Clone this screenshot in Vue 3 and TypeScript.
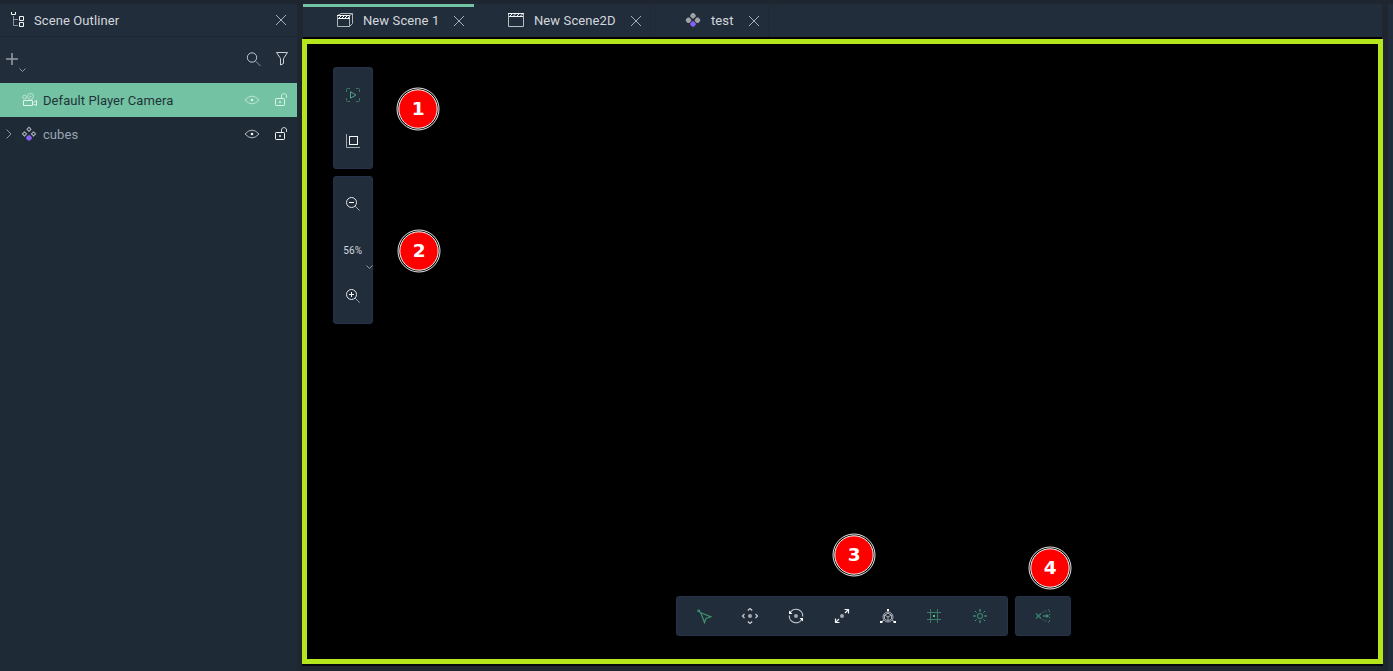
<script setup lang="ts">
interface Tab { label: string; icon: 'scene3d' | 'scene2d' | 'prefab'; cls: string; active?: boolean }
const tabs: Tab[] = [
  { label: 'New Scene 1', icon: 'scene3d', cls: 'tab-a', active: true },
  { label: 'New Scene2D', icon: 'scene2d', cls: 'tab-b' },
  { label: 'test', icon: 'prefab', cls: 'tab-c' },
]
const markers = [
  { n: 1, x: 418, y: 109 },
  { n: 2, x: 419, y: 251 },
  { n: 3, x: 854, y: 555 },
  { n: 4, x: 1050, y: 568 },
]
const rows = [
  { label: 'Default Player Camera', selected: true },
  { label: 'cubes', selected: false },
]
</script>

<template>
  <div class="editor">
    <aside class="outliner">
      <header class="panel-head">
        <svg class="tree" width="16" height="16" fill="none">
          <path d="M3.5 4V13.5H8M3.5 7.5H8" stroke="#8b98a0" />
          <path d="M1.5 0V2.5H5.5V0M9.5 4.5h4v4h-4zM9.5 10.5h4v4h-4z" stroke="#f4f6f7" />
        </svg>
        <span class="title">Scene Outliner</span>
        <svg class="close" width="12" height="12"><path d="M1 1L11 11M11 1L1 11" stroke="#a7aeb5" /></svg>
      </header>
      <div class="tools">
        <svg class="add" width="28" height="24" fill="none">
          <path d="M6 7H18M12 1V13" stroke="#979ea7" stroke-width="1.5" />
          <path d="M19.5 16.5L22.5 19.5L25.5 16.5" stroke="#8c959f" />
        </svg>
        <svg class="search" width="16" height="16" fill="none" stroke="#c3c7cc">
          <circle cx="6" cy="5.5" r="4.7" /><path d="M9.5 9L14.5 14" stroke="#8c959f" />
        </svg>
        <svg class="filter" width="14" height="16" fill="none" stroke="#cdd0d4">
          <path d="M1.5 1.5H12.5L8.5 7.5V12.5L5.5 14V7.5Z" />
        </svg>
      </div>
      <div v-for="row in rows" :key="row.label" class="row" :class="{ selected: row.selected }">
        <svg class="expand" width="8" height="12" fill="none">
          <path v-if="!row.selected" d="M1.5 1.5L6 6L1.5 10.5" stroke="#8d98a3" />
        </svg>
        <svg v-if="row.selected" class="node" width="17" height="16" fill="none" stroke="#e2f6ed">
          <circle cx="3.6" cy="5" r="1.8" opacity=".65" /><circle cx="9.5" cy="4.4" r="3" opacity=".65" />
          <circle cx="9.5" cy="4.4" r=".4" />
          <path d="M2.5 8.5H11.5V13.5H2.5ZM12.5 10.5L15.5 8.5V13.5L12.5 12" />
        </svg>
        <svg v-else class="node" width="17" height="16" fill="none" stroke="#a5a9ae" stroke-width="1.2">
          <path d="M8 1.2L10 3.3L8 5.4L6 3.3ZM3.5 5.8L5.6 7.9L3.5 10L1.4 7.9ZM12.5 5.8L14.6 7.9L12.5 10L10.4 7.9Z" stroke-linejoin="round" />
          <path d="M7 9.3H9L10.8 11.2V12.8L9 14.6H7L5.2 12.8V11.2Z" fill="#8860f2" stroke="none" />
        </svg>
        <span class="name">{{ row.label }}</span>
        <svg class="eye" width="16" height="12" fill="none">
          <path d="M1 6Q8-1.7 15 6Q8 13.7 1 6Z" stroke="currentColor" opacity=".7" />
          <circle cx="8" cy="6" r="1.3" fill="currentColor" />
        </svg>
        <svg class="lock" width="14" height="14" fill="none" stroke="currentColor">
          <rect x="1.5" y="5.5" width="9" height="7" rx=".7" />
          <path d="M7.5 5V3C7.5-.2 12.5-.2 12.5 3V5" opacity=".85" />
          <path d="M5 9H7" stroke-width="2" opacity=".7" />
        </svg>
      </div>
    </aside>

    <main class="workspace">
      <nav class="tabs">
        <div v-for="tab in tabs" :key="tab.label" class="tab" :class="[tab.cls, { active: tab.active }]">
          <svg v-if="tab.icon === 'scene3d'" class="tab-icon" width="17" height="16" fill="none" stroke="#aeb5bc">
            <path d="M.5 3.5H12.5V14.5H.5ZM.5 3.5L4 1.5H15.5L12.5 3.5M15.5 1.5V11.5L12.5 14.5" />
            <path d="M0 3.5H13M1 6.5H13" stroke="#f1f3f5" />
            <path d="M2 6L4 4M5 6L7 4M8 6L10 4M11 6L12.5 4.5" stroke="#f1f3f5" />
          </svg>
          <svg v-else-if="tab.icon === 'scene2d'" class="tab-icon" width="17" height="16" fill="none" stroke="#b7bdc3">
            <path d="M.5 1.5H15.5V14.5H.5Z" />
            <path d="M0 1.5H16M1 4.5H15" stroke="#f1f3f5" />
            <path d="M2 4L4 2M5.5 4L7.5 2M9 4L11 2M12.5 4L14.5 2" stroke="#f1f3f5" />
          </svg>
          <svg v-else class="tab-icon" width="17" height="16" fill="#9fa3a7">
            <path d="M7.2 1h1.6L10.7 2.9v1.6L8.8 6.4H7.2L5.3 4.5V2.9ZM2.7 5.5h1.6L6.2 7.4V9L4.3 10.9H2.7L.8 9V7.4ZM11.7 5.5h1.6L15.2 7.4V9L13.3 10.9h-1.6L9.8 9V7.4Z" />
            <path d="M7.2 9.3h1.6l2 1.9v1.6l-2 1.9H7.2l-2-1.9v-1.6Z" fill="#865ff4" />
          </svg>
          <span class="tab-label">{{ tab.label }}</span>
          <svg class="close" width="12" height="12"><path d="M1 1L11 11M11 1L1 11" stroke="#a7aeb5" /></svg>
        </div>
      </nav>
      <section class="viewport"></section>
    </main>
    <div class="edge"></div>

    <div class="bar vertical view-bar">
      <svg class="tool" viewBox="0 0 24 24" fill="none">
        <path d="M5.5 9V6.5Q5.5 5.5 6.5 5.5H9M15 5.5H17.5Q18.5 5.5 18.5 6.5V9M18.5 15V17.5Q18.5 18.5 17.5 18.5H15M9 18.5H6.5Q5.5 18.5 5.5 17.5V15" stroke="#3b7868" />
        <path d="M9.5 8.8L15 12L9.5 15.2Z" stroke="#4ba77f" />
      </svg>
      <svg class="tool" viewBox="0 0 24 24" fill="none">
        <path d="M5.5 5V18.5H19" stroke="#a5acb3" /><rect x="8.5" y="7.5" width="8" height="8" stroke="#f5f6f7" />
      </svg>
    </div>
    <div class="bar vertical zoom-bar">
      <svg class="tool" viewBox="0 0 24 24" fill="none" stroke="#e5e7e9">
        <circle cx="10.5" cy="10.5" r="5" /><path d="M8 10.5H13" stroke="#fff" /><path d="M14 14L18.7 18.7" stroke="#9aa2aa" />
      </svg>
      <div class="percent">56%
        <svg class="chevron" width="8" height="6" fill="none"><path d="M1.5 1.5L4.5 4.5L7.5 1.5" stroke="#929aa4" /></svg>
      </div>
      <svg class="tool" viewBox="0 0 24 24" fill="none" stroke="#e5e7e9">
        <circle cx="10.5" cy="10.5" r="5" /><path d="M8 10.5H13M10.5 8V13" stroke="#fff" /><path d="M14 14L18.7 18.7" stroke="#9aa2aa" />
      </svg>
    </div>
    <div class="bar gizmo-bar">
      <svg class="tool" viewBox="0 0 24 24" fill="none">
        <circle cx="6.7" cy="6.7" r="1.5" fill="#3d806c" />
        <path d="M7 7L8.8 8.8L12.5 18.5L14 14.5L18.8 12.8L8.8 8.8" stroke="#42936f" stroke-width="1.2" />
      </svg>
      <svg class="tool" viewBox="0 0 24 24" fill="none" stroke="#d0d3d7" stroke-width="1.2">
        <circle cx="12" cy="12" r="2" fill="#a2a8b0" stroke="none" />
        <path d="M9.8 6.5L12 4.5L14.2 6.5M9.8 17.5L12 19.5L14.2 17.5M6.5 9.8L4.5 12L6.5 14.2M17.5 9.8L19.5 12L17.5 14.2" />
      </svg>
      <svg class="tool" viewBox="0 0 24 24" fill="none" stroke="#cdd1d5" stroke-width="1.1">
        <circle cx="12" cy="12" r="2" fill="#a2a8b0" stroke="none" />
        <path d="M6 9A6.7 6.7 0 0 1 18.7 12.5M18 15A6.7 6.7 0 0 1 5.3 11.5" />
        <path d="M5 6.5V10H8.5ZM19 17.5V14H15.5Z" fill="#fff" stroke="none" />
      </svg>
      <svg class="tool" viewBox="0 0 24 24" fill="none" stroke="#f0f1f3" stroke-width="1.2">
        <circle cx="12" cy="12" r="2" fill="#a2a8b0" stroke="none" />
        <path d="M14.5 5.5H18.5V9.5M18.5 5.5L15 9M5.5 14.5V18.5H9.5M5.5 18.5L9 15" />
      </svg>
      <svg class="tool" viewBox="0 0 24 24" fill="none" stroke="#a6acb4">
        <circle cx="12" cy="13" r="5" /><path d="M12 5V10M4.5 18.5L8 16M19.5 18.5L16 16M8.5 11L12 9.3L15.5 11V15L12 17L8.5 15ZM8.5 11L12 13L15.5 11M12 13V17" />
        <path d="M11 5H13V7H11ZM4 17H6.5V19H4ZM17.5 17H20V19H17.5Z" fill="#fff" stroke="none" />
      </svg>
      <svg class="tool" viewBox="0 0 24 24" fill="none" stroke="#3b7a69">
        <path d="M8.5 5V19M15.5 5V19M5 8.5H19M5 15.5H19" /><rect x="11" y="11" width="2" height="2" fill="#52be8c" stroke="none" />
      </svg>
      <svg class="tool" viewBox="0 0 24 24" fill="none" stroke="#3c8069" stroke-width="1.2">
        <circle cx="12" cy="12" r="2.5" />
        <path d="M12 5V7.8M12 16.2V19M5 12H8M16 12H19" stroke-width="1.7" />
        <path d="M7 7L8.5 8.5M15.5 8.5L17 7M15.5 15.5L17 17M8.5 15.5L7 17" stroke="#48a27a" stroke-width="1" />
      </svg>
    </div>
    <div class="bar snap-bar">
      <svg class="tool" viewBox="0 0 24 24" fill="none" stroke="#3b806a">
        <path d="M5 9.5L10 14.5M10 9.5L5 14.5" stroke-width="1.2" />
        <path d="M12 12H17" stroke-width="1.6" /><path d="M15.5 9.8L18 12L15.5 14.2Z" fill="#43956f" stroke="none" />
        <path d="M11.5 8.5L18.5 5.5V18.5L11.5 15.5" stroke-dasharray="1.3 1.7" />
      </svg>
    </div>

    <svg v-for="m in markers" :key="m.n" class="marker" :style="{ left: m.x - 22 + 'px', top: m.y - 22 + 'px' }" width="44" height="44">
      <circle cx="22" cy="22" r="21" fill="#000" stroke="#fff" stroke-width=".9" />
      <circle cx="22" cy="22" r="19.2" fill="#f00" stroke="#fff" stroke-width="1" />
      <text x="22.3" y="28.3" text-anchor="middle">{{ m.n }}</text>
    </svg>
  </div>
</template>

<style>
body { margin: 0; background: #1f2630; overflow: hidden; }
</style>
<style scoped>
.editor { position: relative; display: flex; width: 1393px; height: 671px; padding-top: 4px; box-sizing: border-box; overflow: hidden; background: #1f2630; color: #d4d7db; font: 13px/16px Roboto, "Liberation Sans", sans-serif; }
svg { display: block; flex: none; }
.outliner { width: 297px; height: 667px; flex: none; background: #1e2a36; }
.panel-head { display: flex; align-items: center; height: 32px; border-bottom: 1px solid #1e2733; background: #222d3c; border-radius: 0 2px 0 0; }
.tree { margin-left: 10px; }
.title { margin-left: 8px; padding-top: 1px; letter-spacing: .1px; }
.panel-head .close { margin-left: auto; margin-right: 10px; }
.tools { display: flex; height: 46px; background: #222d3c; }
.add { margin: 15px 0 0; }
.search { margin: 15px 0 0 218px; }
.filter { margin: 14px 0 0 13px; }
.row { display: flex; align-items: center; height: 34px; color: #f2f5f6; }
.row.selected { background: #72c2a3; color: #dcf5ea; }
.expand { margin-left: 5px; }
.node { margin-left: 8px; }
.name { margin-left: 5px; padding-top: 2px; letter-spacing: .07px; color: #9ba4b1; }
.selected .name { color: #1f3437; }
.eye { margin-left: auto; }
.lock { margin: -1px 9px 0 14px; }
.workspace { display: flex; flex-direction: column; margin-left: 5px; width: 1081px; height: 660px; }
.tabs { display: flex; height: 33px; margin: 0 1px; background: #222d3c; box-shadow: 0 2px 0 #000; }
.tab { display: flex; align-items: center; box-sizing: border-box; border-right: 1px solid #202a37; padding-right: 8px; }
.tab-a { width: 171px; padding-left: 34px; }
.tab-b { width: 177px; padding-left: 34px; }
.tab-c { width: 118px; padding-left: 34px; }
.tab.active { border-right: 0; padding-right: 9px; box-shadow: inset 0 3px #72c2a3; }
.tab-icon { margin-top: -2px; }
.tab-label { margin-left: 9px; letter-spacing: .1px; }
.tab .close { margin-left: auto; }
.viewport { box-sizing: border-box; height: 625px; margin-top: 2px; border: 5px solid #b5e61d; background: #000; box-shadow: 0 2px #05080c; }
.edge { width: 5px; height: 667px; margin-left: 5px; background: #222d3c; }
.bar { position: absolute; display: flex; box-sizing: border-box; border: 1px solid #27324a; border-radius: 3px; background: #222d3c; }
.vertical { flex-direction: column; left: 333px; width: 40px; padding: 4px 0; align-items: center; }
.view-bar { top: 67px; height: 102px; }
.zoom-bar { top: 176px; height: 148px; }
.gizmo-bar { left: 676px; top: 596px; width: 332px; height: 40px; padding: 0 4px; align-items: center; }
.snap-bar { left: 1015px; top: 596px; width: 56px; height: 40px; padding: 0 4px; align-items: center; }
.tool { width: 24px; height: 24px; margin: 0 11px; }
.vertical .tool { margin: 11px 0; }
.percent { position: relative; width: 38px; height: 46px; text-align: center; line-height: 47px; font-size: 10px; letter-spacing: .1px; text-indent: -.5px; }
.chevron { position: absolute; right: -1px; top: 37px; }
.marker { position: absolute; }
.marker text { fill: #fff; font: bold 18.5px "DejaVu Sans", sans-serif; }
</style>
